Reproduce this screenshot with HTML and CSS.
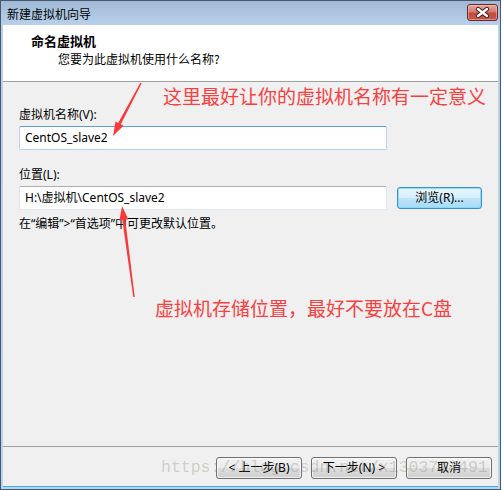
FILE: index.html
```html
<!DOCTYPE html>
<html lang="zh-CN">
<head>
<meta charset="utf-8">
<title>新建虚拟机向导</title>
<link rel="stylesheet" href="styles.css">
</head>
<body>
<div class="window">
  <div class="titlebar">
    <span class="title">新建虚拟机向导</span>
    <div class="close">
      <svg width="31" height="17" viewBox="0 0 31 17">
        <path d="M11 5 L20 12 M20 5 L11 12" stroke="#4a1a1a" stroke-width="4.4" stroke-linecap="round" fill="none"/>
        <path d="M11 5 L20 12 M20 5 L11 12" stroke="#ffffff" stroke-width="2.4" stroke-linecap="round" fill="none"/>
      </svg>
    </div>
  </div>
  <div class="client">
    <div class="header">
      <div class="h-title">命名虚拟机</div>
      <div class="h-sub">您要为此虚拟机使用什么名称?</div>
    </div>
    <div class="content">
      <div class="lbl">虚拟机名称(V):</div>
      <div class="field focus">CentOS_slave2</div>
      <div class="lbl lbl2">位置(L):</div>
      <div class="row">
        <div class="field">H:\虚拟机\CentOS_slave2</div>
        <div class="btn default">浏览(R)...</div>
      </div>
      <div class="hint">在“编辑”&gt;“首选项”中可更改默认位置。</div>
    </div>
    <div class="footer">
      <div class="btn">&lt; 上一步(B)</div>
      <div class="btn">下一步(N) &gt;</div>
      <div class="btn">取消</div>
    </div>
  </div>
  <div class="overlay">
    <svg class="arrows" width="503" height="490" viewBox="0 0 503 490">
      <polygon fill="#f83a3a" points="141.66,83.35 120.83,124.3 123.48,125.7 113,136 115.52,121.5 118.17,122.9 140.34,82.65"/>
      <polygon fill="#f83a3a" points="134.74,296.9 125.29,219.7 128.3,219.3 122,206 119.4,220.5 122.31,220.1 133.26,297.1"/>
    </svg>
    <span class="note note1">这里最好让你的虚拟机名称有一定意义</span>
    <span class="note note2">虚拟机存储位置，最好不要放在C盘</span>
    <span class="watermark">https://blog.csdn.net/x1303774491</span>
  </div>
</div>
</body>
</html>
```
FILE: styles.css
```css
html, body {
  margin: 0;
  padding: 0;
  background: #ffffff;
}
body {
  width: 503px;
  height: 490px;
  overflow: hidden;
  font-family: "Noto Sans", "Noto Sans CJK SC", sans-serif;
  font-size: 12px;
  color: #000;
}
.window {
  position: relative;
  box-sizing: border-box;
  width: 501px;
  height: 490px;
  border: 1px solid #46586b;
  background: linear-gradient(#a0b9d6 0px, #b8d0ea 24px, #b9d4ee 100%);
  display: flex;
  flex-direction: column;
}
.titlebar {
  height: 24px;
  display: flex;
  align-items: flex-start;
  flex-shrink: 0;
}
.title {
  margin-left: 6px;
  line-height: 26px;
  font-size: 12px;
  font-family: "Noto Sans CJK SC", sans-serif;
}
.close {
  margin-left: auto;
  margin-right: 2px;
  margin-top: 3px;
  width: 31px;
  height: 17px;
  box-sizing: border-box;
  border: 1px solid #6b2a26;
  border-radius: 3px;
  background: linear-gradient(#e3a89f 0%, #d47a6e 45%, #c24a3e 55%, #c65a4c 100%);
  box-shadow: inset 0 0 0 1px rgba(255, 210, 200, 0.45);
  display: flex;
}
.close svg {
  margin: -1px;
}
.client {
  margin: 0 2px 2px 2px;
  height: 462px;
  background: #f0f0f0;
  display: flex;
  flex-direction: column;
  border-bottom: 1px solid #3aaee6;
}
.header {
  box-sizing: border-box;
  height: 57px;
  background: #ffffff;
  border-bottom: 1px solid #a0a0a0;
  padding: 7px 0 0 28px;
  font-family: "Noto Sans CJK SC", sans-serif;
}
.h-title {
  font-size: 13px;
  font-weight: bold;
  line-height: 17px;
}
.h-sub {
  margin-top: 2px;
  margin-left: 27px;
  font-size: 12px;
  line-height: 16px;
}
.content {
  flex: 1;
  padding: 25px 0 0 16px;
}
.lbl {
  line-height: 16px;
  height: 16px;
}
.lbl2 {
  margin-top: 17px;
}
.field {
  box-sizing: border-box;
  width: 368px;
  height: 24px;
  margin-top: 3px;
  padding: 0 5px;
  line-height: 22px;
  background: #ffffff;
  border: 1px solid #dfe6ee;
  border-top-color: #abadb3;
  border-radius: 2px;
  white-space: nowrap;
}
.field.focus {
  border-color: #b5d3ec;
  border-top-color: #5c9fd8;
}
.row {
  display: flex;
  align-items: center;
  margin-top: 3px;
}
.row .field {
  margin-top: 0;
}
.btn {
  box-sizing: border-box;
  width: 86px;
  height: 22px;
  border: 1px solid #707070;
  border-radius: 3px;
  background: linear-gradient(#f2f2f2 0%, #ebebeb 48%, #dddddd 52%, #cfcfcf 100%);
  box-shadow: inset 0 0 0 1px rgba(255, 255, 255, 0.7);
  display: flex;
  align-items: center;
  justify-content: center;
  line-height: 16px;
  white-space: nowrap;
}
.btn.default {
  margin-left: 10px;
  width: 85px;
  border-color: #3c8fd0;
  background: linear-gradient(#e8f6fd 0%, #d7effc 48%, #bfe5fa 52%, #a9daf4 100%);
  box-shadow: inset 0 0 0 1px rgba(120, 220, 250, 0.8);
}
.hint {
  margin-top: 6px;
  line-height: 16px;
}
.footer {
  box-sizing: border-box;
  height: 40px;
  border-top: 1px solid #a0a0a0;
  padding: 10px 6px 0 0;
  display: flex;
  justify-content: flex-end;
  align-items: flex-start;
  gap: 9px;
}
.overlay {
  position: absolute;
  top: -1px;
  left: -1px;
  width: 503px;
  height: 490px;
  pointer-events: none;
}
.arrows {
  position: absolute;
  top: 0;
  left: 0;
}
.note {
  position: absolute;
  font-family: "Noto Sans CJK SC", sans-serif;
  font-size: 19px;
  line-height: 19px;
  color: #f84040;
  white-space: nowrap;
}
.note1 {
  left: 163px;
  top: 86px;
}
.note2 {
  left: 155px;
  top: 298px;
}
.watermark {
  position: absolute;
  left: 161px;
  top: 458px;
  font-family: "Liberation Mono", monospace;
  font-size: 16.5px;
  line-height: 20px;
  color: rgba(120, 120, 110, 0.3);
  white-space: nowrap;
}
```
